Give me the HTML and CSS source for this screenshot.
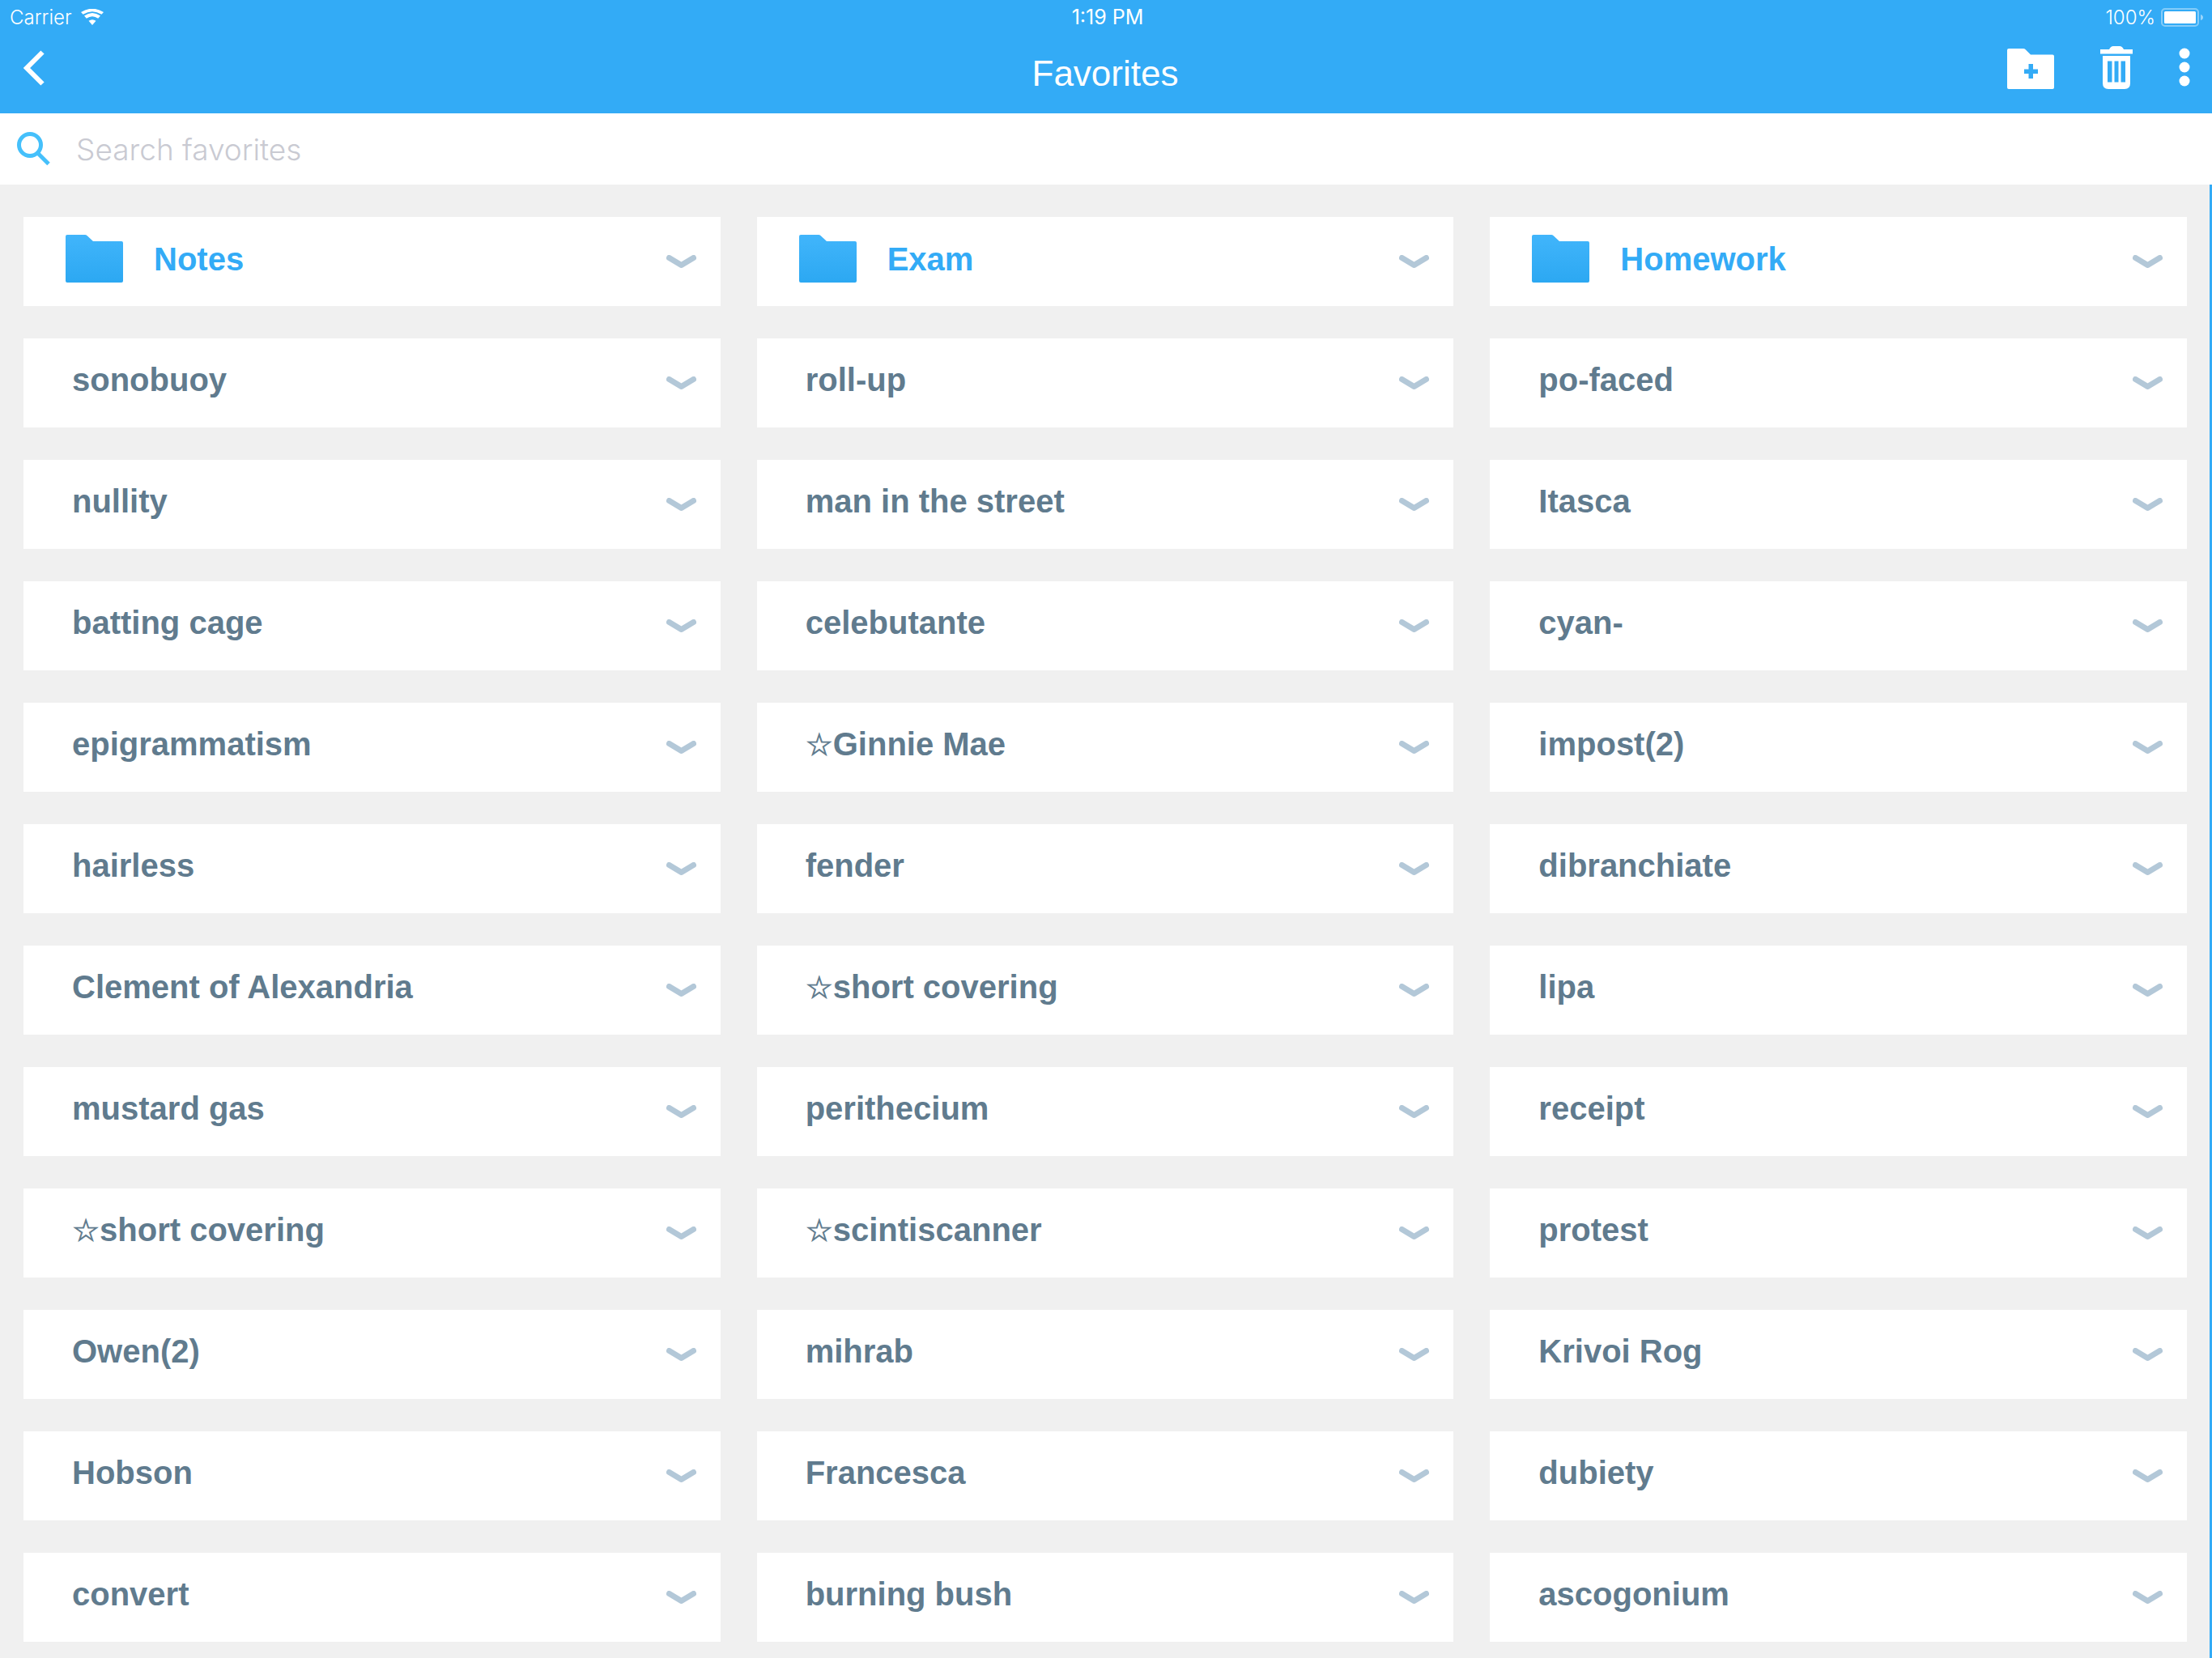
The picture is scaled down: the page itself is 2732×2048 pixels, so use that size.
FILE: index.html
```html
<!DOCTYPE html>
<html lang="en">
<head>
<meta charset="utf-8">
<title>Favorites</title>
<link rel="stylesheet" href="styles.css">
</head>
<body>
<svg class="defs" width="0" height="0" aria-hidden="true">
  <defs>
    <linearGradient id="fg" x1="0" y1="0" x2="0" y2="1"><stop offset="0" stop-color="#41b5fb"/><stop offset="1" stop-color="#2ca8f2"/></linearGradient>
    <symbol id="chev" viewBox="0 0 37 16"><path d="M3.500 3.500 18.500 12.500 33.500 3.500" fill="none" stroke="#b3c8d8" stroke-width="7" stroke-linecap="round" stroke-linejoin="round"/></symbol>
    <symbol id="folder" viewBox="0 0 71 59"><path d="M2 0H24Q25.500 0 26.500 1L34 8H69Q71 8 71 10V57Q71 59 69 59H2Q0 59 0 57V2Q0 0 2 0Z" fill="url(#fg)"/></symbol>
  </defs>
</svg>
<header class="top">
  <div class="status">
    <div class="status-left">
      <span>Carrier</span>
      <svg class="wifi" viewBox="0 0 28 20"><path d="M14 20 9.500 14.800Q14 11.500 18.500 14.800ZM6.800 11.800 4 8.500Q14 1.500 24 8.500L21.200 11.800Q14 6.500 6.800 11.800ZM2.600 6.800 0 3.900Q14-4.500 28 3.900L25.400 6.800Q14-.5 2.600 6.800Z" fill="#fff"/></svg>
    </div>
    <span class="time">1:19 PM</span>
    <div class="status-right">
      <span>100%</span>
      <svg class="battery" viewBox="0 0 52 23"><rect x="1" y="1" width="45" height="21" rx="4" fill="none" stroke="#fff" stroke-opacity=".4" stroke-width="2"/><rect x="4" y="4" width="39" height="15" rx="1.500" fill="#fff"/><path d="M49 8Q52 9 52 11.500T49 15Z" fill="#fff" fill-opacity=".5"/></svg>
    </div>
  </div>
  <div class="nav">
    <svg class="back" viewBox="0 0 27 44"><path d="M24.500 2.500 5 22 24.500 41.500" fill="none" stroke="#fff" stroke-width="6"/></svg>
    <h1 class="title">Favorites</h1>
    <div class="actions">
      <svg class="add-folder" viewBox="0 0 58 50"><path fill-rule="evenodd" d="M2 0H20Q21.500 0 22.500 1L29 7.500H56Q58 7.500 58 9.500V48Q58 50 56 50H2Q0 50 0 48V2Q0 0 2 0ZM26.500 19V25.500H21V31H26.500V37H32V31H38V25.500H32V19Z" fill="#fff"/></svg>
      <svg class="trash" viewBox="0 0 40 53"><path fill-rule="evenodd" d="M0 4H11Q13 0 16 0H24Q27 0 29 4H40V9.500H0ZM3 12H37V46Q37 53 30 53H10Q3 53 3 46ZM9 18.500V44.500H14.500V18.500ZM17.500 18.500V44.500H22.500V18.500ZM25.500 18.500V44.500H31V18.500Z" fill="#fff"/></svg>
      <svg class="dots" viewBox="0 0 14 48"><circle cx="7" cy="7" r="6.500" fill="#fff"/><circle cx="7" cy="24" r="6.500" fill="#fff"/><circle cx="7" cy="41" r="6.500" fill="#fff"/></svg>
    </div>
  </div>
</header>
<div class="search">
  <svg class="search-icon" viewBox="0 0 41 42"><circle cx="16" cy="16" r="13.500" fill="none" stroke="#45c0fb" stroke-width="5"/><path d="M25.500 26 39 39.500" fill="none" stroke="#45c0fb" stroke-width="5"/></svg>
  <span class="search-text">Search favorites</span>
</div>
<main class="list">
  <div class="card card-folder"><svg class="folder"><use href="#folder"/></svg><span class="label">Notes</span><svg class="chev"><use href="#chev"/></svg></div>
  <div class="card card-folder"><svg class="folder"><use href="#folder"/></svg><span class="label">Exam</span><svg class="chev"><use href="#chev"/></svg></div>
  <div class="card card-folder"><svg class="folder"><use href="#folder"/></svg><span class="label">Homework</span><svg class="chev"><use href="#chev"/></svg></div>

  <div class="card"><span class="word">sonobuoy</span><svg class="chev"><use href="#chev"/></svg></div>
  <div class="card"><span class="word">roll-up</span><svg class="chev"><use href="#chev"/></svg></div>
  <div class="card"><span class="word">po-faced</span><svg class="chev"><use href="#chev"/></svg></div>

  <div class="card"><span class="word">nullity</span><svg class="chev"><use href="#chev"/></svg></div>
  <div class="card"><span class="word">man in the street</span><svg class="chev"><use href="#chev"/></svg></div>
  <div class="card"><span class="word">Itasca</span><svg class="chev"><use href="#chev"/></svg></div>

  <div class="card"><span class="word">batting cage</span><svg class="chev"><use href="#chev"/></svg></div>
  <div class="card"><span class="word">celebutante</span><svg class="chev"><use href="#chev"/></svg></div>
  <div class="card"><span class="word">cyan-</span><svg class="chev"><use href="#chev"/></svg></div>

  <div class="card"><span class="word">epigrammatism</span><svg class="chev"><use href="#chev"/></svg></div>
  <div class="card"><span class="word"><span class="star">☆</span>Ginnie Mae</span><svg class="chev"><use href="#chev"/></svg></div>
  <div class="card"><span class="word">impost(2)</span><svg class="chev"><use href="#chev"/></svg></div>

  <div class="card"><span class="word">hairless</span><svg class="chev"><use href="#chev"/></svg></div>
  <div class="card"><span class="word">fender</span><svg class="chev"><use href="#chev"/></svg></div>
  <div class="card"><span class="word">dibranchiate</span><svg class="chev"><use href="#chev"/></svg></div>

  <div class="card"><span class="word">Clement of Alexandria</span><svg class="chev"><use href="#chev"/></svg></div>
  <div class="card"><span class="word"><span class="star">☆</span>short covering</span><svg class="chev"><use href="#chev"/></svg></div>
  <div class="card"><span class="word">lipa</span><svg class="chev"><use href="#chev"/></svg></div>

  <div class="card"><span class="word">mustard gas</span><svg class="chev"><use href="#chev"/></svg></div>
  <div class="card"><span class="word">perithecium</span><svg class="chev"><use href="#chev"/></svg></div>
  <div class="card"><span class="word">receipt</span><svg class="chev"><use href="#chev"/></svg></div>

  <div class="card"><span class="word"><span class="star">☆</span>short covering</span><svg class="chev"><use href="#chev"/></svg></div>
  <div class="card"><span class="word"><span class="star">☆</span>scintiscanner</span><svg class="chev"><use href="#chev"/></svg></div>
  <div class="card"><span class="word">protest</span><svg class="chev"><use href="#chev"/></svg></div>

  <div class="card"><span class="word">Owen(2)</span><svg class="chev"><use href="#chev"/></svg></div>
  <div class="card"><span class="word">mihrab</span><svg class="chev"><use href="#chev"/></svg></div>
  <div class="card"><span class="word">Krivoi Rog</span><svg class="chev"><use href="#chev"/></svg></div>

  <div class="card"><span class="word">Hobson</span><svg class="chev"><use href="#chev"/></svg></div>
  <div class="card"><span class="word">Francesca</span><svg class="chev"><use href="#chev"/></svg></div>
  <div class="card"><span class="word">dubiety</span><svg class="chev"><use href="#chev"/></svg></div>

  <div class="card"><span class="word">convert</span><svg class="chev"><use href="#chev"/></svg></div>
  <div class="card"><span class="word">burning bush</span><svg class="chev"><use href="#chev"/></svg></div>
  <div class="card"><span class="word">ascogonium</span><svg class="chev"><use href="#chev"/></svg></div>
</main>
</body>
</html>
```
FILE: styles.css
```css
* { box-sizing: border-box; }
html, body { margin: 0; padding: 0; }
body {
  width: 2732px;
  height: 2048px;
  overflow: hidden;
  background: #f0f0f0;
  font-family: "Liberation Sans", Arial, sans-serif;
}
.defs { display: block; height: 0; }
.top { height: 140px; background: #33abf6; color: #fff; }
.status {
  height: 40px;
  display: grid;
  grid-template-columns: 1fr auto 1fr;
  align-items: center;
  padding: 2px 11px 0 12px;
  font-family: Inter, "Liberation Sans", sans-serif;
  font-size: 24px;
  font-weight: 300;
}
.status-left { display: flex; align-items: center; gap: 11px; }
.status-right { display: flex; align-items: center; justify-content: flex-end; gap: 7px; }
.time { font-weight: 400; font-size: 25px; margin-left: 3px; }
.wifi { width: 28px; height: 20px; }
.battery { width: 52px; height: 23px; }
.nav {
  height: 100px;
  display: grid;
  grid-template-columns: 1fr auto 1fr;
  align-items: center;
  padding: 0 27px 0 28px;
}
.back { width: 27px; height: 44px; margin-bottom: 12px; }
.title { margin: 1px 3px 0 0; font-size: 44px; font-weight: 400; line-height: 1; }
.actions { display: flex; justify-content: flex-end; align-items: center; margin-bottom: 13px; }
.add-folder { width: 58px; height: 50px; margin: 3px 57px 0 0; }
.trash { width: 40px; height: 53px; margin-right: 57px; }
.dots { width: 14px; height: 48px; margin-bottom: 1px; }
.search { height: 88px; background: #fff; display: flex; align-items: center; padding-left: 21px; }
.search-icon { width: 41px; height: 42px; margin-right: 32px; }
.search-text {
  font-family: Inter, "Liberation Sans", sans-serif;
  font-size: 37px;
  font-weight: 300;
  color: #c9cad2;
}
.list {
  display: grid;
  grid-template-columns: repeat(3, 1fr);
  column-gap: 45px;
  row-gap: 40px;
  padding: 40px 28px 0 29px;
  border-right: 3px solid #33abf6;
  height: 1820px;
  align-content: start;
}
.card {
  height: 110px;
  background: #fff;
  display: flex;
  align-items: center;
  padding: 0 30px 0 60px;
  font-size: 40px;
  font-weight: 700;
}
.card-folder { padding-left: 52px; }
.word { flex: 1; color: #607b8e; line-height: 1; margin-bottom: 8px; }
.label { flex: 1; color: #33abf6; line-height: 1; margin-bottom: 6px; }
.folder { width: 71px; height: 59px; margin-right: 38px; margin-bottom: 8px; }
.star { font-family: "DejaVu Sans", sans-serif; font-weight: 700; font-size: 38px; -webkit-text-stroke: 0.8px #607b8e; }
.chev { width: 37px; height: 16px; }
```
